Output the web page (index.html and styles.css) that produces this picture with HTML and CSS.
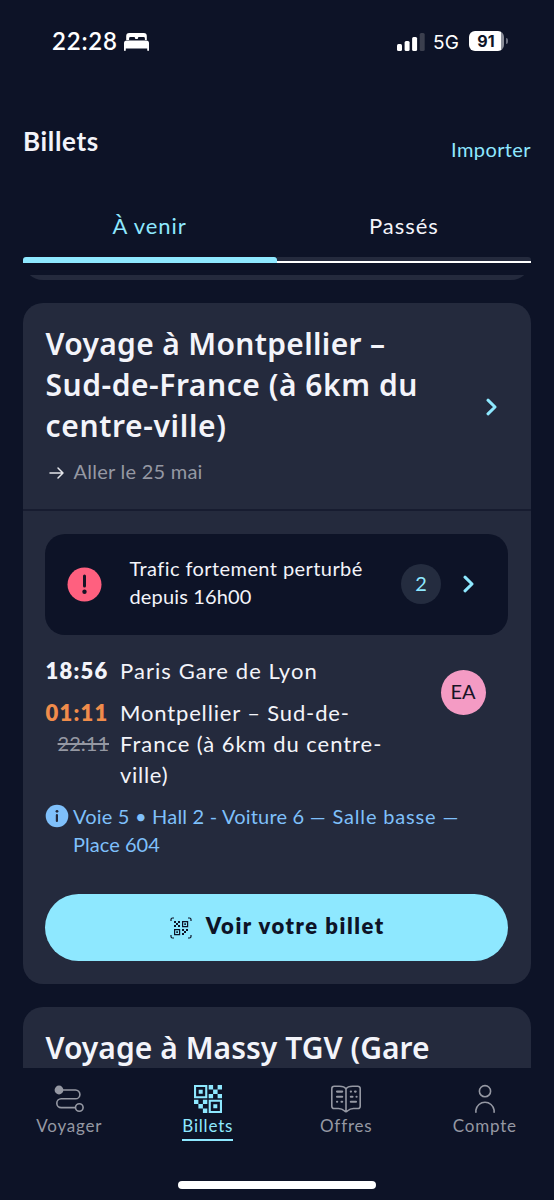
FILE: index.html
```html
<!DOCTYPE html>
<html lang="fr">
<head>
<meta charset="utf-8">
<title>Billets</title>
<link rel="stylesheet" href="styles.css">
</head>
<body>
<div class="status">
  <span class="clock">22:28</span>
  <svg class="bed" width="25" height="18" viewBox="0 0 25 18" fill="#fff"><path d="M2.200 7V3a3 3 0 0 1 3-3h14.600a3 3 0 0 1 3 3v4h-1.900V5.500a1.400 1.400 0 0 0-1.400-1.400h-4.300a1.400 1.400 0 0 0-1.400 1.400V6h-2.600v-.500a1.400 1.400 0 0 0-1.400-1.400H6.500a1.400 1.400 0 0 0-1.400 1.400V7z"/><path d="M0 10.200A2.700 2.700 0 0 1 2.700 7.500h19.600a2.700 2.700 0 0 1 2.700 2.700V17a.9.9 0 0 1-1.800 0v-1.500H1.800V17a.9.9 0 0 1-1.800 0z"/></svg>
  <svg class="signal" width="28" height="18" viewBox="0 0 28 18" fill="#fff"><rect x="0" y="11" width="5" height="7" rx="1.500"/><rect x="7.600" y="8" width="5" height="10" rx="1.500"/><rect x="15.100" y="4" width="5" height="14" rx="1.500"/><rect x="22.700" y="0" width="5" height="18" rx="1.500" fill="#3b3f4e"/></svg>
  <span class="network">5G</span>
  <span class="battery">91</span><span class="battery-cap"></span>
</div>
<header class="header"><h1 class="page-title">Billets</h1><a class="import">Importer</a></header>
<div class="tabs">
  <div class="tab tab-active"><span>À venir</span></div>
  <div class="tab"><span>Passés</span></div>
</div>
<main class="list">
  <section class="card card-previous"></section>
  <section class="card">
    <div class="card-head">
      <div class="card-summary">
        <h2 class="trip-title"><span class="title-start">Voyage à Montpellier –</span><br><span class="title-middle">Sud-de-France (à 6km du</span><br><span class="title-end">centre-ville)</span></h2>
        <div class="direction"><svg width="16" height="14" viewBox="0 0 16 14" fill="none" stroke="#e4e5ea" stroke-width="1.500" stroke-linecap="round" stroke-linejoin="round"><path d="M1 7h13M9 2l5 5-5 5"/></svg><span>Aller le 25 mai</span></div>
      </div>
      <svg class="chevron" width="12" height="18" viewBox="0 0 12 18"><path d="M2 2.200 9 9l-7 6.800"/></svg>
    </div>
    <div class="card-body">
      <div class="alert">
        <svg width="35" height="35" viewBox="0 0 35 35"><circle cx="17.500" cy="17.500" r="17" fill="#ff607f"/><path d="M17.500 9v10" stroke="#181426" stroke-width="3" stroke-linecap="round"/><circle cx="17.500" cy="24.700" r="2.200" fill="#181426"/></svg>
        <div class="alert-text">Trafic fortement perturbé<br><span class="alert-end">depuis 16h00</span></div>
        <span class="count">2</span>
        <svg class="chevron" width="12" height="18" viewBox="0 0 12 18"><path d="M2 2.200 9 9l-7 6.800"/></svg>
      </div>
      <div class="journey">
        <div class="stops">
          <span class="time">18:56</span><span class="stop stop-start">Paris Gare de Lyon</span>
          <div class="times"><span class="time time-late">01:11</span><span class="time-old">22:11</span></div>
          <span class="stop">Montpellier – Sud-de-<br><span class="stop-middle">France (à 6km du centre-</span><br><span class="stop-end">ville)</span></span>
        </div>
        <span class="avatar">EA</span>
      </div>
      <div class="seat">
        <svg width="24" height="24" viewBox="0 0 24 24"><circle cx="12" cy="12" r="11.300" fill="#7fc0fb"/><circle cx="12" cy="7.300" r="1.400" fill="#242a3d"/><path d="M11.900 11v6" stroke="#242a3d" stroke-width="2.200" stroke-linecap="round"/></svg>
        <div class="seat-text"><span class="seat-platform">Voie 5 • Hall 2 - Voiture 6 </span>— Salle basse —<br><span class="seat-place">Place 604</span></div>
      </div>
      <button class="ticket-button">
        <svg width="22" height="22" viewBox="0 0 22 22" fill="none" stroke="#0d1327" stroke-width="1.200"><path d="M1 4V2.500A1.500 1.500 0 0 1 2.500 1H4M18 1h1.500A1.500 1.500 0 0 1 21 2.500V4M21 18v1.500a1.500 1.500 0 0 1-1.500 1.500H18M4 21H2.500A1.500 1.500 0 0 1 1 19.500V18"/><path d="M12.600 4.600h5v5h-5zM4.600 12.600h5v5h-5z"/><g fill="#0d1327" stroke="none"><path d="M14.300 6.300h1.600v1.600h-1.600zM6.300 14.300h1.600v1.600H6.300z"/><path d="M4 4h2v2H4zM8 4h2v2H8zM6 6h2v2H6zM4 8h2v2H4zM8 8h2v2H8z"/><path d="M12 12h2v2h-2zM16 12h2v2h-2zM14 14h2v2h-2zM12 16h2v2h-2z"/></g></svg>
        <span>Voir votre billet</span>
      </button>
    </div>
  </section>
  <section class="card card-next"><h2 class="trip-title next-title">Voyage à Massy TGV (Gare</h2></section>
</main>
<nav class="nav">
  <a class="nav-item"><svg width="30" height="30" viewBox="0 0 30 30" fill="none" stroke="#9598a3" stroke-width="1.600"><path d="M5 6h16.500a4.400 4.400 0 0 1 0 8.800H7.200a4.400 4.400 0 0 0 0 8.800H21"/><circle cx="5" cy="6" r="4.400" fill="#9598a3" stroke="none"/><circle cx="25.300" cy="23.500" r="3.800"/></svg><span>Voyager</span></a>
  <a class="nav-item nav-active"><svg width="30" height="30" viewBox="0 0 30 30" fill="#8ee8ff"><path fill-rule="evenodd" d="M1 1h13.300v13.300H1zM3.100 3.100v9.100h9.100V3.100zM15.700 15.700H29V29H15.700zm2.100 2.100v9.100h9.100v-9.100z"/><path d="M5.700 5.700h4v4h-4zM20.300 20.300h4v4h-4zM15.700 1h4.400v4.400h-4.400zM24.600 1H29v4.400h-4.400zM20.100 5.400h4.500v4.500h-4.500zM15.700 9.900h4.400v4.400h-4.400zM24.600 9.900H29v4.400h-4.400zM1 15.700h4.400v4.400H1zM9.900 15.700h4.400v4.400H9.900zM5.400 20.100h4.500v4.500H5.400zM9.900 24.600h4.400V29H9.900z"/></svg><span>Billets</span></a>
  <a class="nav-item"><svg width="32" height="30" viewBox="0 0 32 30" fill="none" stroke="#9598a3" stroke-width="1.600"><path d="M16 5c-1.200-2-3.500-2.800-6.500-2.800H4.300a2.500 2.500 0 0 0-2.500 2.500v17.500c0 1.400 1 2.300 2.500 2.300h4.200c3 0 4.500 1 5.800 2.300.8.800 1.200 1 1.700 1s.9-.2 1.700-1c1.300-1.300 2.800-2.300 5.800-2.300h4.200c1.500 0 2.500-.9 2.500-2.300V4.700a2.500 2.500 0 0 0-2.500-2.500h-5.200C19.500 2.200 17.200 3 16 5zv22"/><path stroke-width="2.100" stroke-linecap="round" d="M7 7.600h5.200M7 12.800h5.200M7 17.800h.2M11.500 17.800h.7M20.800 7.600h.2M25 7.600h.7M20.800 12.800h1.700M26.500 12.800h.1M20.800 17.800h5.200"/></svg><span>Offres</span></a>
  <a class="nav-item"><svg width="30" height="30" viewBox="0 0 30 30" fill="none" stroke="#9598a3" stroke-width="1.600" stroke-linecap="round"><circle cx="15" cy="7.200" r="5.600"/><path d="M5.900 28.300v-2.200a9.200 9.200 0 0 1 18.200 0v2.200"/></svg><span>Compte</span></a>
</nav>
<div class="home-indicator"></div>
</body>
</html>
```
FILE: styles.css
```css
* { box-sizing: border-box; }
body { margin: 0; width: 554px; height: 1200px; overflow: hidden; background: #0d1327; color: #f3f4fa; font-family: Lato, sans-serif; display: flex; flex-direction: column; }
h1, h2 { margin: 0; }
svg { flex: none; display: block; }

.status { height: 84px; display: flex; align-items: center; padding: 0 46px 0 52px; font-family: Inter, sans-serif; color: #fff; }
.clock { font: 600 24px/30px Lato, sans-serif; width: 72px; letter-spacing: 0.8px; white-space: nowrap; margin-top: -2px; }
.bed { margin-top: -1px; }
.signal { margin-left: auto; margin-top: -1px; }
.network { font-size: 19px; letter-spacing: 0.2px; margin: 0 0 0 8px; width: 36px; }
.battery { width: 35px; height: 20px; border-radius: 6px; background: linear-gradient(90deg, #fff 32px, #8b8e99 32px); color: #0d1327; font-size: 16px; font-weight: 700; line-height: 20px; text-align: center; padding-right: 1px; margin-top: -2px; }
.battery-cap { width: 2px; height: 6px; margin: -2px 0 0 2px; border-radius: 0 2px 2px 0; background: #6c7080; }

.header { height: 106px; padding: 35px 23px 0; display: flex; justify-content: space-between; }
.page-title { font-size: 26px; line-height: 44px; font-weight: 700; letter-spacing: 0.65px; }
.import { font-size: 20px; line-height: 60px; color: #8ee8ff; letter-spacing: 0.4px; }

.tabs { display: flex; height: 73px; margin: 0 23px 0 22.5px; font-size: 22px; letter-spacing: 1px; }
.tab { flex: 1; display: flex; flex-direction: column; text-align: center; line-height: 62px; padding-top: 5px; }
.tab::after { content: ""; height: 6px; border-bottom: 2px solid #fff; background: #242a3d; border-radius: 0 3px 0 0; }
.tab-active { color: #8ee8ff; }
.tab-active::after { background: #8ee8ff; border-color: #8ee8ff; border-radius: 3px 3px 0 0; }

.list { height: 793px; margin: 11.5px 23px 0 22.5px; overflow: hidden; display: flex; flex-direction: column; gap: 23.5px; flex: none; }
.card { background: #242a3d; border-radius: 20px; flex: none; }
.card-previous { height: 60px; margin-top: -55px; }
.card-next { height: 200px; padding: 20px 23px; }
.card-head { height: 208px; border-bottom: 2px solid #171c30; padding: 20px 33px 0 23px; display: flex; justify-content: space-between; align-items: center; }
.card-head .chevron { margin-bottom: 19px; }
.card-summary { align-self: flex-start; }
.trip-title { font: 600 30px/41px "Noto Sans", sans-serif; white-space: nowrap; }
.title-start { letter-spacing: 0.33px; }
.title-middle { letter-spacing: 0.54px; }
.title-end { letter-spacing: 0.65px; }
.next-title { letter-spacing: 0.05px; }
.direction { display: flex; align-items: center; gap: 9px; padding: 9px 0 0 3px; font-size: 20px; line-height: 32px; letter-spacing: 0.25px; color: #9598a3; }
.direction svg { margin-top: 3px; }
.chevron { fill: none; stroke: #8ee8ff; stroke-width: 3; stroke-linecap: round; stroke-linejoin: round; }

.card-body { padding: 22.5px 23px 22.5px 22.5px; }
.alert { height: 101px; border-radius: 20px; background: #0d1327; display: flex; align-items: center; padding: 0 33px 0 22px; }
.alert-text { flex: 1; margin: -4px 0 0 27.5px; font-size: 20px; line-height: 28px; letter-spacing: 0.42px; white-space: nowrap; }
.alert-end { letter-spacing: 0.15px; }
.count { width: 40px; height: 40px; border-radius: 50%; background: #242c3f; color: #8ee8ff; font-size: 20px; line-height: 38px; text-align: center; margin-right: 22px; }
.journey { display: flex; justify-content: space-between; padding: 20px 22.5px 0 0; height: 168px; }
.stops { display: grid; grid-template-columns: 64px auto; column-gap: 11px; row-gap: 11px; align-content: start; font-size: 22px; line-height: 31px; }
.times { display: flex; flex-direction: column; align-items: flex-end; }
.time { font-weight: 800; letter-spacing: 1.2px; width: 64px; padding-left: 0.5px; }
.time-late { color: #f08c4b; }
.time-old { font-size: 20px; color: #9598a3; text-decoration: line-through; }
.stop { letter-spacing: 0.85px; white-space: nowrap; }
.stop-start { letter-spacing: 1.07px; }
.stop-middle { letter-spacing: 0.96px; }
.stop-end { letter-spacing: 0.7px; }
.avatar { width: 45px; height: 45px; border-radius: 50%; background: #f49bc4; color: #181426; font-size: 20px; line-height: 43px; text-align: center; margin-top: 15px; }
.seat { display: flex; gap: 4.5px; height: 91px; color: #7fc0fb; font-size: 20px; line-height: 28px; letter-spacing: 0.85px; white-space: nowrap; }
.seat svg { margin-top: 1px; margin-left: -0.5px; }
.seat-text { margin-top: -1px; }
.seat-platform { letter-spacing: 0.2px; }
.seat-place { letter-spacing: 0.05px; }
.ticket-button { width: 100%; height: 67.500px; border: 0; border-radius: 34px; background: #8ee8ff; color: #0d1327; font: 800 22px/30px Lato, sans-serif; letter-spacing: 1.55px; display: flex; justify-content: center; align-items: center; gap: 13.5px; padding: 0 0 2px 2px; }
.ticket-button svg { margin-top: 4px; }

.nav { display: flex; padding-top: 16px; height: 113.500px; font-size: 17px; color: #9598a3; }
.nav-item { flex: 1; display: flex; flex-direction: column; align-items: center; letter-spacing: 0.8px; line-height: 23px; }
.nav-active { color: #8ee8ff; }
.nav-active span { border-bottom: 2.500px solid #8ee8ff; height: 27px; }
.home-indicator { width: 198px; height: 7.500px; border-radius: 4px; background: #fff; margin: 0 auto; flex: none; }
```
